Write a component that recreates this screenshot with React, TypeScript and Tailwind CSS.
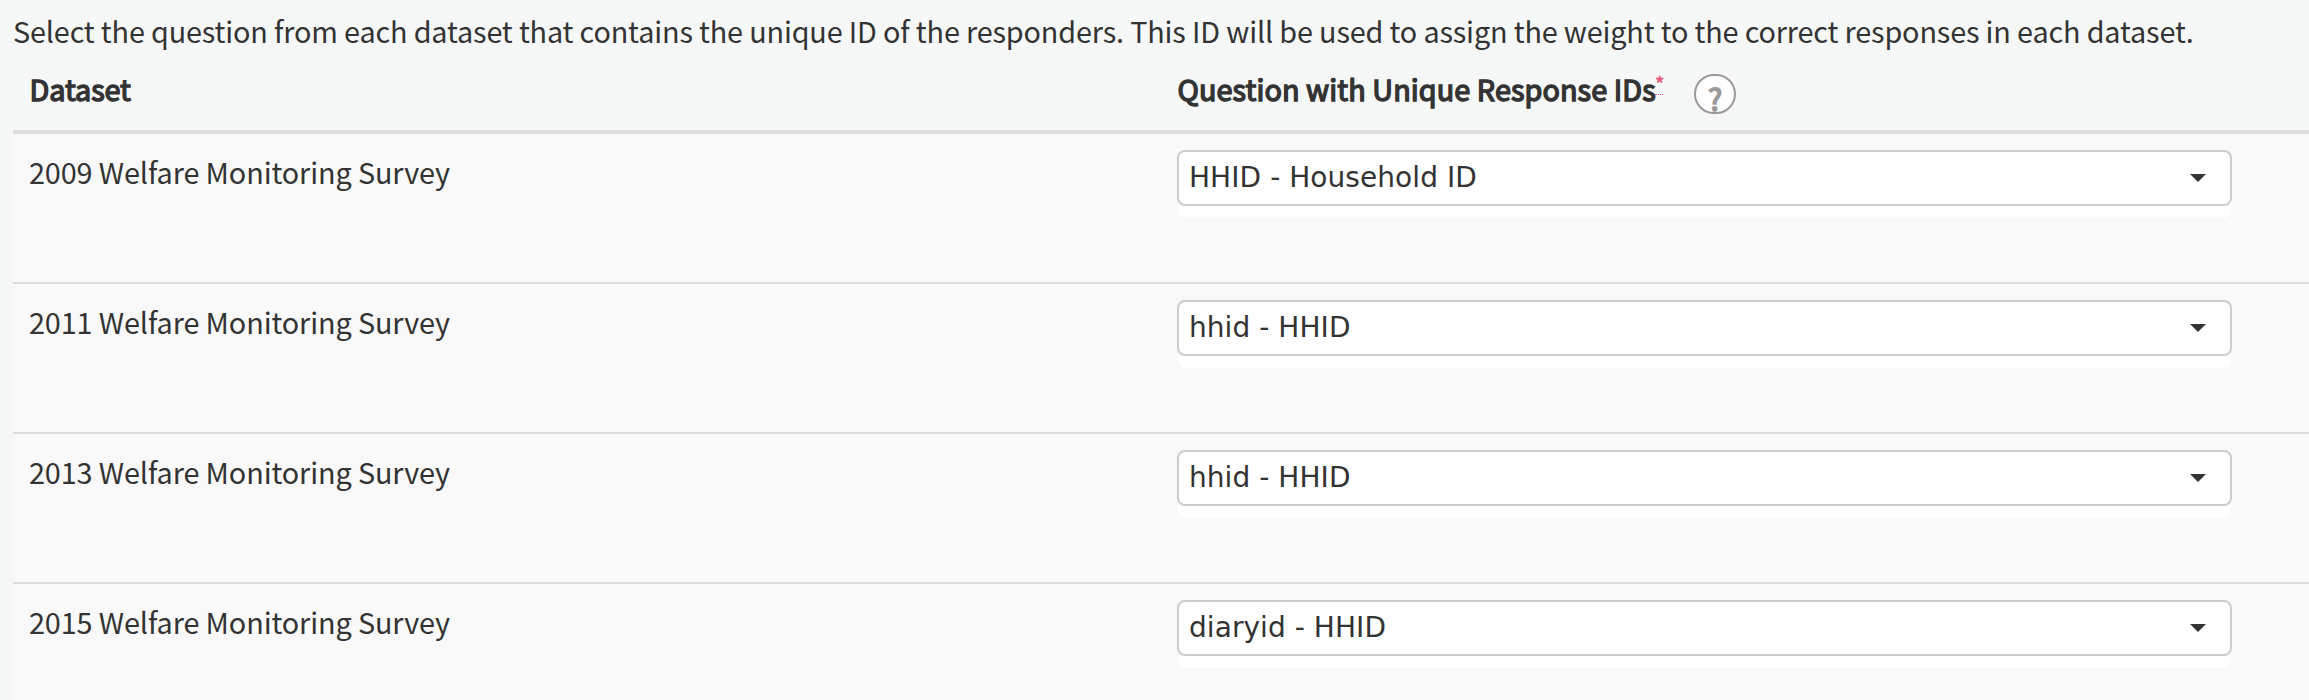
const rows = [
  { dataset: "2009 Welfare Monitoring Survey", question: "HHID - Household ID" },
  { dataset: "2011 Welfare Monitoring Survey", question: "hhid - HHID" },
  { dataset: "2013 Welfare Monitoring Survey", question: "hhid - HHID" },
  { dataset: "2015 Welfare Monitoring Survey", question: "diaryid - HHID" },
];

function QuestionSelect({ value }: { value: string }) {
  return (
    <div className="mx-px h-[68px] w-[1053px] rounded-lg bg-white">
      <button
        type="button"
        className="-ml-px flex h-14 w-[1055px] items-center justify-between rounded-lg border-2 border-[#cccccc] bg-white pr-6 pl-[10px] font-['DejaVu_Sans',sans-serif] text-[28px] leading-8 tracking-[0.06px]"
      >
        <span className="-mt-px">{value}</span>
        <svg className="h-2 w-4" viewBox="0 0 16 8" fill="#333333">
          <path d="M0 0h16L8 8z" />
        </svg>
      </button>
    </div>
  );
}

export default function App() {
  return (
    <main className="h-[700px] w-full overflow-hidden bg-[#f6f8f8] pl-[13px] font-['Noto_Sans_CJK_SC',sans-serif] text-[28.8px] tracking-[-0.15px] text-[#333333]">
      <p className="h-[62px] pt-[11px] leading-[40px] whitespace-nowrap">
        Select the question from each dataset that contains the unique ID of the responders. This ID will be used to
        assign the weight to the correct responses in each dataset.
      </p>
      <div className="flex h-[72px] border-b-4 border-[#dddddd] pl-4">
        <div className="w-[1148px] pt-[7px] pl-[0.5px] leading-10 tracking-[-0.08px] [-webkit-text-stroke:1.4px_#333333]">
          Dataset
        </div>
        <div className="flex items-start">
          <span className="w-[478px] pt-[7px] pl-[0.5px] leading-10 tracking-[0.08px] whitespace-nowrap [-webkit-text-stroke:1.4px_#333333]">
            Question with Unique Response IDs
          </span>
          <span className="mt-[11px] h-[22px] w-2 border-b border-dotted border-[#e4566e] text-[20px] leading-[22px] text-[#e4566e] [-webkit-text-stroke:0.6px_#e4566e]">
            *
          </span>
          <span className="mt-3 ml-[31px] flex h-10 w-[42px] items-center justify-center rounded-full border-2 border-[#999999] bg-white pt-[7px] text-[30px] leading-none text-[#999999] [-webkit-text-stroke:1.5px_#999999]">
            ?
          </span>
        </div>
      </div>
      {rows.map((row) => (
        <div key={row.dataset} className="flex h-[150px] border-b-2 border-[#dddddd] bg-[#f9f9f9] pl-4">
          <div className="w-[1148px] pt-[18px] leading-10 tracking-[-0.11px]">{row.dataset}</div>
          <div className="pt-4">
            <QuestionSelect value={row.question} />
          </div>
        </div>
      ))}
    </main>
  );
}
